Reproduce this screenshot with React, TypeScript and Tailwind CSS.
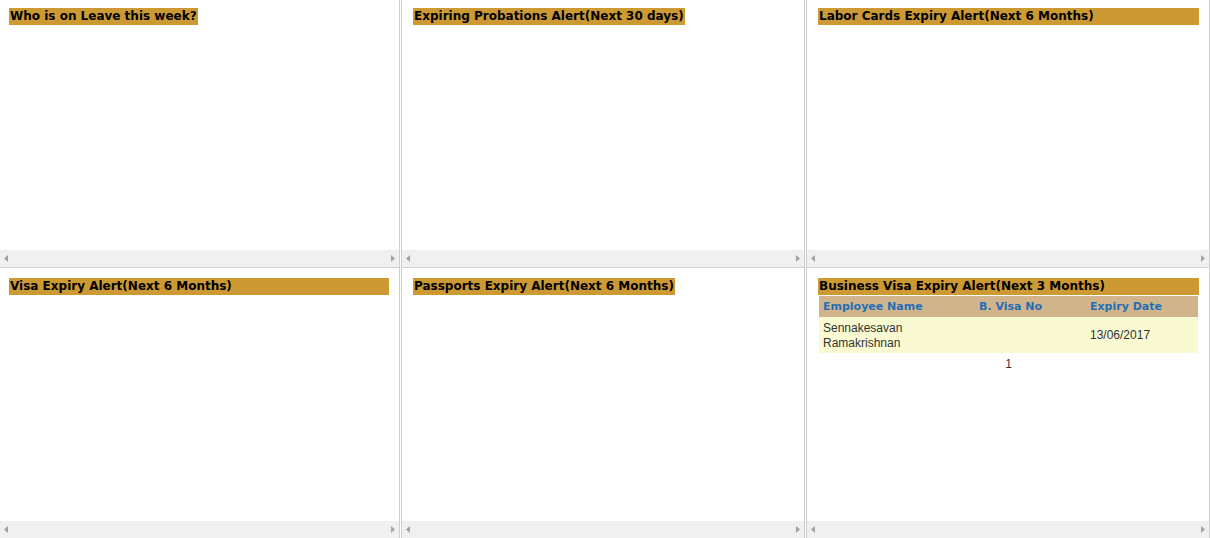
import React from "react";

const verdana = { fontFamily: '"DejaVu Sans", Verdana, sans-serif' };

function ScrollBar() {
  return (
    <div className="h-[17px] bg-[#f0f0f0] flex items-center justify-between px-[4px] shrink-0">
      <svg width="4" height="7" viewBox="0 0 4 7">
        <polygon points="4,0 4,7 0,3.5" fill="#a3a3a3" />
      </svg>
      <svg width="4" height="7" viewBox="0 0 4 7">
        <polygon points="0,0 0,7 4,3.5" fill="#a3a3a3" />
      </svg>
    </div>
  );
}

function Heading({ text, full }: { text: string; full?: boolean }) {
  return (
    <div className={full ? "block" : "flex"}>
      <div
        className="bg-[#cc9933] text-black font-bold text-[12px] leading-[17px] h-[17px] pl-[1px] pr-[1px] whitespace-nowrap"
        style={verdana}
      >
        {text}
      </div>
    </div>
  );
}

function Panel({
  children,
  className,
  contentClass,
}: {
  children?: React.ReactNode;
  className: string;
  contentClass: string;
}) {
  return (
    <div className={"flex flex-col bg-white border-[#cfcfcf] " + className}>
      <div className={"flex-1 " + contentClass}>{children}</div>
      <ScrollBar />
    </div>
  );
}

function VisaTable() {
  return (
    <div className="mt-px">
      <table className="w-full border-collapse" style={{ fontFamily: '"Liberation Sans", Arial, sans-serif' }}>
        <thead>
          <tr className="bg-[#d2b48c] h-[21px]">
            <th className="text-left font-bold text-[11px] text-[#1f6fb5] pl-[4px] pt-[2px] w-[160px]" style={verdana}>
              Employee Name
            </th>
            <th className="text-left font-bold text-[11px] text-[#1f6fb5] pt-[2px] w-[111px]" style={verdana}>
              B. Visa No
            </th>
            <th className="text-left font-bold text-[11px] text-[#1f6fb5] pt-[2px]" style={verdana}>
              Expiry Date
            </th>
          </tr>
        </thead>
        <tbody>
          <tr className="bg-[#fafad2] h-[36px] text-[12px] leading-[15px] text-[#333333]">
            <td className="pl-[4px] pt-px w-[160px]">
              Sennakesavan
              <br />
              Ramakrishnan
            </td>
            <td></td>
            <td className="pt-px">13/06/2017</td>
          </tr>
        </tbody>
      </table>
      <div
        className="text-center text-[12px] leading-[15px] text-[#333333] mt-[4px]"
        style={{ fontFamily: '"Liberation Sans", Arial, sans-serif' }}
      >
        1
      </div>
    </div>
  );
}

export default function App() {
  return (
    <div className="w-[1210px] h-[538px] overflow-hidden bg-white">
      <div className="grid grid-cols-[400px_404px_404px] gap-x-px grid-rows-[268px_270px]">
        <Panel className="border-r border-b" contentClass="pt-[8px] pl-[9px] pr-[11px]">
          <Heading text="Who is on Leave this week?" />
        </Panel>
        <Panel className="border-l border-r border-b" contentClass="pt-[8px] pl-[11px] pr-[11px]">
          <Heading text="Expiring Probations Alert(Next 30 days)" />
        </Panel>
        <Panel className="border-l border-r border-b" contentClass="pt-[8px] pl-[11px] pr-[10px]">
          <Heading text="Labor Cards Expiry Alert(Next 6 Months)" full />
        </Panel>
        <Panel className="border-r" contentClass="pt-[10px] pl-[9px] pr-[10px]">
          <Heading text="Visa Expiry Alert(Next 6 Months)" full />
        </Panel>
        <Panel className="border-l border-r" contentClass="pt-[10px] pl-[11px] pr-[11px]">
          <Heading text="Passports Expiry Alert(Next 6 Months)" />
        </Panel>
        <Panel className="border-l border-r" contentClass="pt-[10px] pl-[11px] pr-[10px]">
          <Heading text="Business Visa Expiry Alert(Next 3 Months)" full />
          <div className="pl-px pr-px">
            <VisaTable />
          </div>
        </Panel>
      </div>
    </div>
  );
}
